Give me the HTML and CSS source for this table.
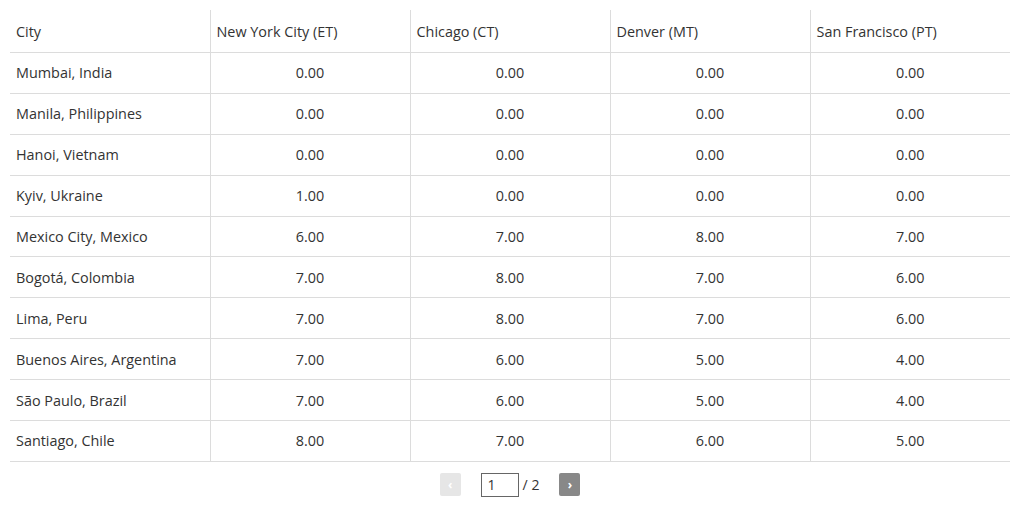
FILE: index.html
```html
<!DOCTYPE html>
<html>
<head>
<meta charset="utf-8">
<link rel="stylesheet" href="styles.css">
</head>
<body>
<div class="wrap">
<table class="grid">
<thead>
<tr><th>City</th><th>New York City (ET)</th><th>Chicago (CT)</th><th>Denver (MT)</th><th>San Francisco (PT)</th></tr>
</thead>
<tbody>
<tr><td>Mumbai, India</td><td>0.00</td><td>0.00</td><td>0.00</td><td>0.00</td></tr>
<tr><td>Manila, Philippines</td><td>0.00</td><td>0.00</td><td>0.00</td><td>0.00</td></tr>
<tr><td>Hanoi, Vietnam</td><td>0.00</td><td>0.00</td><td>0.00</td><td>0.00</td></tr>
<tr><td>Kyiv, Ukraine</td><td>1.00</td><td>0.00</td><td>0.00</td><td>0.00</td></tr>
<tr><td>Mexico City, Mexico</td><td>6.00</td><td>7.00</td><td>8.00</td><td>7.00</td></tr>
<tr><td>Bogotá, Colombia</td><td>7.00</td><td>8.00</td><td>7.00</td><td>6.00</td></tr>
<tr><td>Lima, Peru</td><td>7.00</td><td>8.00</td><td>7.00</td><td>6.00</td></tr>
<tr><td>Buenos Aires, Argentina</td><td>7.00</td><td>6.00</td><td>5.00</td><td>4.00</td></tr>
<tr><td>São Paulo, Brazil</td><td>7.00</td><td>6.00</td><td>5.00</td><td>4.00</td></tr>
<tr><td>Santiago, Chile</td><td>8.00</td><td>7.00</td><td>6.00</td><td>5.00</td></tr>
</tbody>
</table>
<div class="pager">
<span class="btn btn-prev">‹</span>
<span class="page-input">1</span>
<span class="total">/ 2</span>
<span class="btn btn-next">›</span>
</div>
</div>
</body>
</html>
```
FILE: styles.css
```css
html, body { margin: 0; padding: 0; background: #fff; }
body { font-family: "Open Sans", "Liberation Sans", sans-serif; color: #333; font-size: 14.4px; }
.wrap { padding: 10px 10px 0 10px; }
.grid { width: 1000px; border-collapse: collapse; table-layout: fixed; }
.grid th, .grid td { border-left: 1px solid #dcdcdc; border-bottom: 1px solid #dcdcdc; padding: 0 6px; font-weight: normal; }
.grid th:first-child, .grid td:first-child { border-left: none; }
.grid th { height: 42px; text-align: left; }
.grid td { height: 39.9px; text-align: center; }
.grid td:first-child { text-align: left; }
.pager { display: flex; justify-content: center; align-items: center; margin-top: 11px; }
.btn { width: 21px; height: 23px; border-radius: 2px; color: #fff; display: flex; align-items: center; justify-content: center; font-size: 12px; font-weight: bold; }
.btn-prev { background: #e6e6e6; margin-right: 20px; }
.btn-next { background: #888; margin-left: 20px; }
.page-input { box-sizing: border-box; width: 38px; height: 24px; border: 1px solid #666; padding-left: 6px; line-height: 22px; font-size: 14px; }
.total { margin-left: 4px; font-size: 14px; }
```
